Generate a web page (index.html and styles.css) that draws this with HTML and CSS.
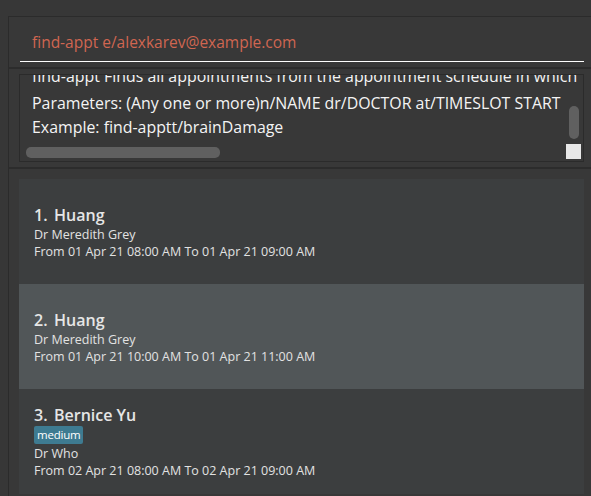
FILE: index.html
```html
<!DOCTYPE html>
<html>
<head>
<meta charset="utf-8">
<link rel="stylesheet" href="styles.css">
</head>
<body>
<div class="frame">
  <div class="cmd">
    <div class="cmd-field">find-appt e/alexkarev@example.com</div>
  </div>
  <div class="divider"></div>
  <div class="result">
    <div class="result-box">
      <div class="result-text">
        <div class="line first">find-appt Finds all appointments from the appointment schedule in which</div>
        <div class="line">Parameters: (Any one or more)n/NAME dr/DOCTOR at/TIMESLOT START</div>
        <div class="line">Example: find-apptt/brainDamage</div>
      </div>
      <div class="hthumb"></div>
      <div class="vthumb"></div>
      <div class="corner"></div>
    </div>
  </div>
  <div class="divider"></div>
  <div class="list">
    <div class="card even">
      <div class="title"><span class="idx">1.</span><span class="name">Huang</span></div>
      <div class="small">Dr Meredith Grey</div>
      <div class="small">From 01 Apr 21 08:00 AM To 01 Apr 21 09:00 AM</div>
    </div>
    <div class="card odd">
      <div class="title"><span class="idx">2.</span><span class="name">Huang</span></div>
      <div class="small">Dr Meredith Grey</div>
      <div class="small">From 01 Apr 21 10:00 AM To 01 Apr 21 11:00 AM</div>
    </div>
    <div class="card even">
      <div class="title"><span class="idx">3.</span><span class="name">Bernice Yu</span></div>
      <div class="tags"><span class="tag">medium</span></div>
      <div class="small">Dr Who</div>
      <div class="small">From 02 Apr 21 08:00 AM To 02 Apr 21 09:00 AM</div>
    </div>
  </div>
</div>
</body>
</html>
```

FILE: styles.css
```css
html, body {
  margin: 0;
  padding: 0;
  background: #373737;
  height: 100%;
  overflow: hidden;
}
body {
  font-family: "Open Sans", "Noto Sans", sans-serif;
  color: #ffffff;
}
.frame {
  margin-left: 8px;
  margin-top: 16px;
  border-left: 1px solid #2b2b2b;
  border-top: 1px solid #2b2b2b;
  background: #383838;
  height: 480px;
  display: flex;
  flex-direction: column;
}
.cmd {
  height: 50px;
  box-sizing: border-box;
  padding: 0 7px 5px 11px;
  display: flex;
  align-items: flex-end;
}
.cmd-field {
  flex: 1;
  height: 37px;
  line-height: 37px;
  border-bottom: 1px solid #ffffff;
  padding-left: 12px;
  font-size: 15.5px;
  color: #d06651;
  white-space: nowrap;
}
.divider {
  height: 2px;
  background: #2c2c2c;
}
.result {
  padding: 5px 7px 5px 10px;
}
.result-box {
  position: relative;
  height: 88px;
  box-sizing: border-box;
  border: 1px solid #2b2b2b;
  overflow: hidden;
}
.result-text {
  margin-top: -11px;
  padding-left: 12px;
  font-size: 15.9px;
  line-height: 24px;
  color: #f4f4f4;
  white-space: nowrap;
}
.first {
  margin-bottom: 3px;
}
.hthumb {
  position: absolute;
  left: 6px;
  top: 72px;
  width: 194px;
  height: 11px;
  border-radius: 5px;
  background: #606060;
}
.vthumb {
  position: absolute;
  left: 549px;
  top: 31px;
  width: 10px;
  height: 33px;
  border-radius: 5px;
  background: #606060;
}
.corner {
  position: absolute;
  left: 546px;
  top: 69px;
  width: 15px;
  height: 15px;
  background: #e8e8e8;
}
.list {
  flex: 1;
  padding: 10px 7px 0 10px;
  overflow: hidden;
}
.card {
  height: 105px;
  box-sizing: border-box;
  padding-left: 15px;
  display: flex;
  flex-direction: column;
  justify-content: center;
}
.even { background: #3c3e3f; }
.odd { background: #515658; }
.title {
  font-size: 16px;
  font-weight: 600;
  line-height: 22px;
  color: #e6e6e6;
  display: flex;
}
.idx { width: 20px; }
.small {
  font-size: 12.5px;
  line-height: 17px;
  color: #e2e2e2;
}
.tags {
  display: flex;
  margin-bottom: 1px;
}
.tag {
  background: #3e7b91;
  color: #ffffff;
  font-size: 11.5px;
  line-height: 18px;
  padding: 0 2px 0 3px;
  border-radius: 2px;
  letter-spacing: -0.2px;
}
```
